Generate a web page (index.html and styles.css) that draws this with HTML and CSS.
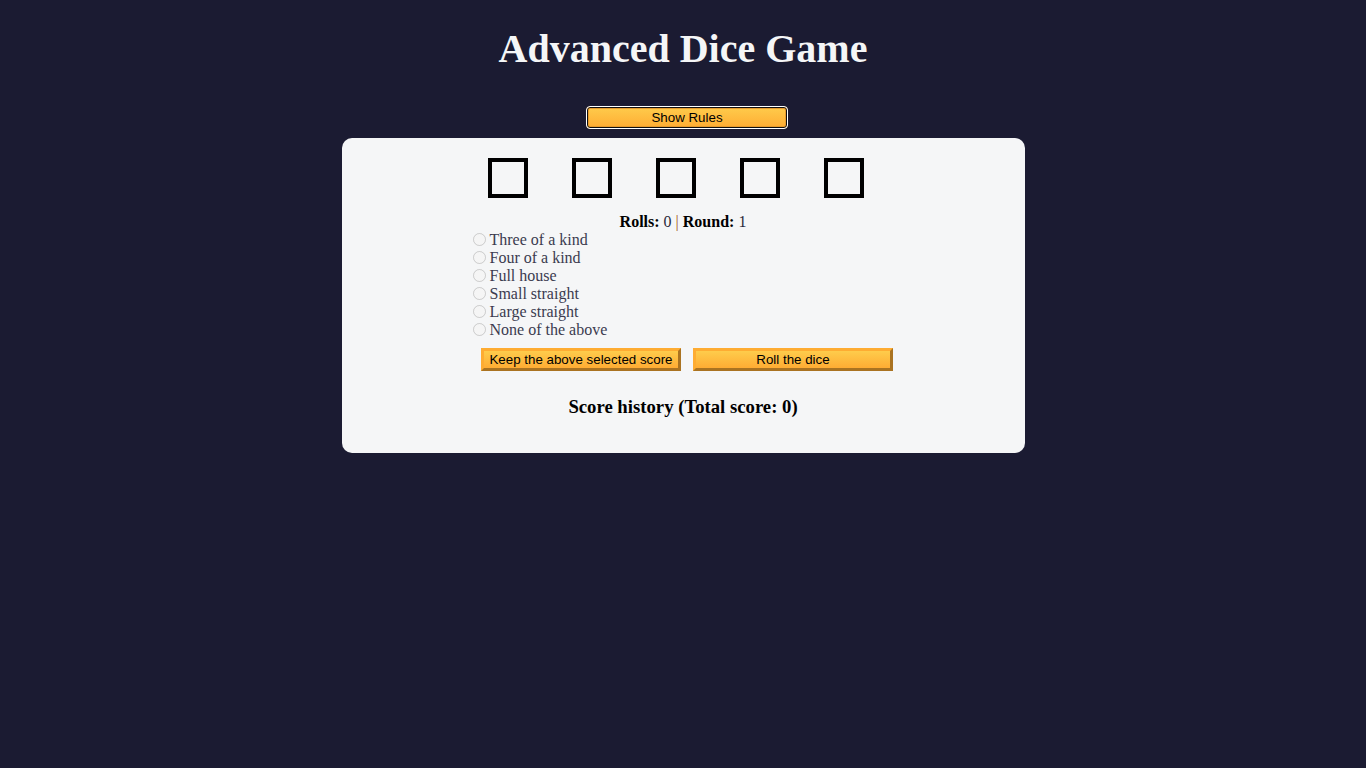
FILE: index.html
```html
<!DOCTYPE html>
<html lang="en">
<head>
<meta charset="UTF-8">
<title>Advanced Dice Game</title>
<link rel="stylesheet" href="styles.css">
</head>
<body>
  <header>
    <h1 class="title">Advanced Dice Game</h1>
    <button class="btn show-rules-btn" type="button">Show Rules</button>
  </header>
  <main class="dice-game">
    <div class="dice-container">
      <div class="die"></div>
      <div class="die"></div>
      <div class="die"></div>
      <div class="die"></div>
      <div class="die"></div>
    </div>
    <p class="rounds-text">
      <strong>Rolls:</strong> <span class="num">0</span> <span class="sep">|</span>
      <strong>Round:</strong> <span class="num">1</span>
    </p>
    <form class="score-options">
      <div class="option"><input type="radio" name="score" disabled><label>Three of a kind</label></div>
      <div class="option"><input type="radio" name="score" disabled><label>Four of a kind</label></div>
      <div class="option"><input type="radio" name="score" disabled><label>Full house</label></div>
      <div class="option"><input type="radio" name="score" disabled><label>Small straight</label></div>
      <div class="option"><input type="radio" name="score" disabled><label>Large straight</label></div>
      <div class="option"><input type="radio" name="score" disabled><label>None of the above</label></div>
    </form>
    <div class="actions">
      <button class="btn" type="button">Keep the above selected score</button>
      <button class="btn" type="button">Roll the dice</button>
    </div>
    <h3 class="score-history">Score history (Total score: 0)</h3>
  </main>
</body>
</html>
```
FILE: styles.css
```css
* {
  box-sizing: border-box;
}

body {
  margin: 0;
  background-color: #1b1b32;
  font-family: "Liberation Serif", "Times New Roman", serif;
  color: #000;
}

header {
  display: flex;
  flex-direction: column;
  align-items: center;
}

.title {
  margin: 25px 0 34px;
  font-size: 40px;
  font-weight: bold;
  color: #f5f6f7;
  text-align: center;
}

.btn {
  width: 200px;
  height: 23px;
  padding: 1px 2px;
  font-family: "Liberation Sans", Arial, sans-serif;
  font-size: 13.333px;
  white-space: nowrap;
  color: #000;
  background-color: #feac32;
  background-image: linear-gradient(#fecc4c, #ffac33);
  border: 3px outset #feac32;
  cursor: pointer;
}

.show-rules-btn {
  width: 202px;
  margin: 0 0 9px 8px;
  border: 1px solid #ffffff;
  border-radius: 4px;
  box-shadow: inset 0 0 0 1px #101010, inset 0 0 0 2px #e79a2c;
}

.dice-game {
  width: 50%;
  margin: 0 auto;
  padding: 20px;
  background-color: #f5f6f7;
  border-radius: 10px;
}

.dice-container {
  display: flex;
  justify-content: center;
  gap: 44px;
  padding-right: 15px;
}

.die {
  width: 40px;
  height: 40px;
  border: 4px solid #000;
}

.rounds-text {
  margin: 15px 0 0;
  text-align: center;
  font-size: 16px;
  line-height: 18px;
  color: #2a2a3a;
}

.rounds-text strong {
  color: #000;
}

.rounds-text .sep {
  color: #a0561a;
}

.score-options {
  width: 431px;
  margin: 0 auto;
  color: #3b3b4f;
  font-size: 16px;
}

.option {
  display: flex;
  align-items: center;
  height: 18px;
}

.option input {
  width: 13px;
  height: 13px;
  margin: 0 4px 2px 5px;
}

.actions {
  display: flex;
  justify-content: center;
  gap: 12px;
  margin-top: 9px;
  padding-left: 8px;
}

.score-history {
  margin: 25px 0 16px;
  text-align: center;
  font-size: 18.72px;
  line-height: 21px;
}
```
